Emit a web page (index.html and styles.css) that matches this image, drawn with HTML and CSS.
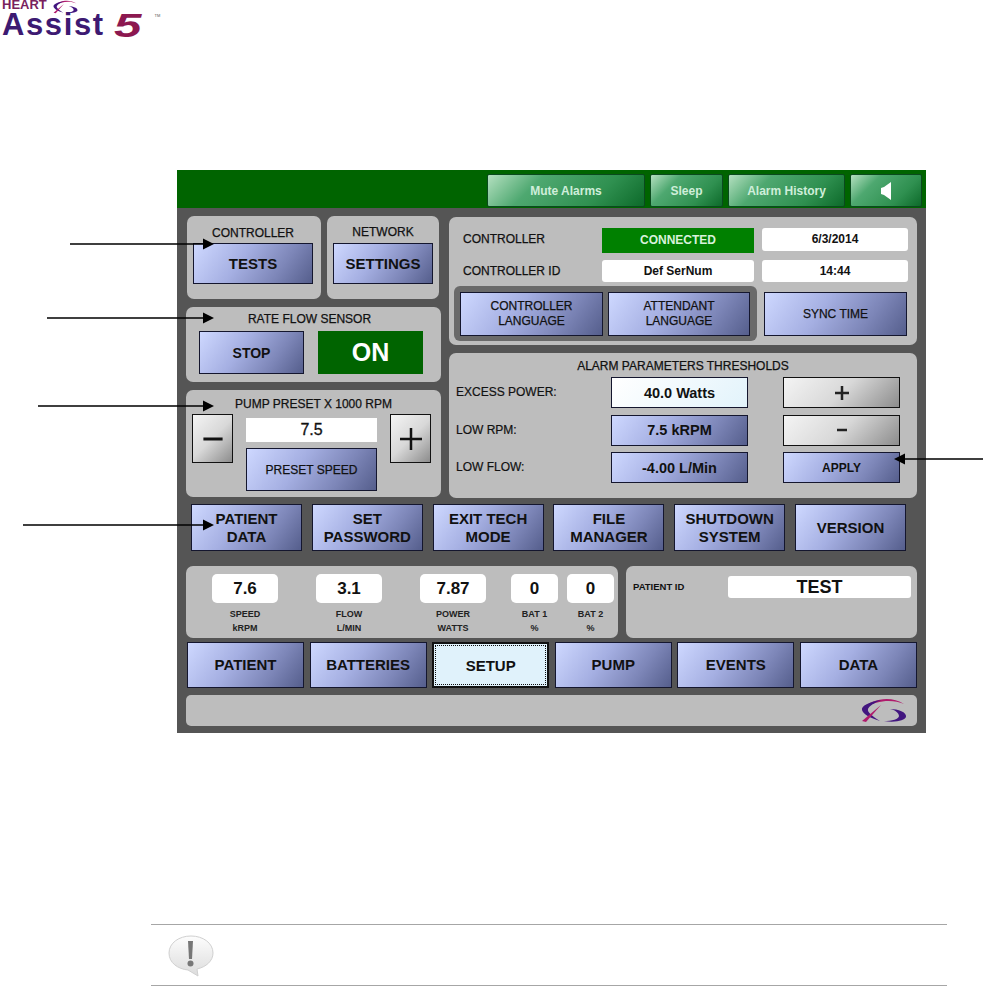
FILE: index.html
```html
<!DOCTYPE html>
<html lang="en">
<head>
  <meta charset="UTF-8" />
  <title>HeartAssist 5 - Setup</title>
  <link rel="stylesheet" href="styles.css">
</head>
<body>

<!-- Logo -->
<header class="logo">
  <div class="logo-top">
    <span class="logo-heart">HEART</span>
    <svg class="logo-swoosh" viewBox="0 0 46 25">
      <path class="sw-pink" d="M3 10C10 1 30-3 43 6 32 1 16 2 3 10Z"/>
      <path class="sw-purple" d="M20 2C8 4 0 8 1 12c1 4 8 8 18 11C11 18 6 14 7 11c1-3 6-6 13-9Z"/>
      <path class="sw-pink" d="M1 23 20 7 5 24Z"/>
      <path class="sw-purple" d="M29 11c8 0 17 3 16 8-1 3-10 6-22 4 8 0 15-2 15-5 0-3-4-6-9-7Z"/>
    </svg>
  </div>
  <div class="logo-bottom">
    <span class="logo-assist">Assist</span>
    <span class="logo-five">5</span>
    <span class="logo-tm">TM</span>
  </div>
</header>

<!-- Controller screen -->
<main class="device">
  <div class="topbar">
    <button class="green-btn mute">Mute Alarms</button>
    <button class="green-btn sleep">Sleep</button>
    <button class="green-btn history">Alarm History</button>
    <button class="green-btn speaker">
      <svg viewBox="0 0 10 18" class="speaker-icon"><path d="M0 6 3 5 10 0V18L3 13 0 12Z"/></svg>
    </button>
  </div>

  <div class="screen">
    <div class="columns">
      <div class="col-left">
        <div class="row-pair">
          <section class="panel panel-controller">
            <div class="label">CONTROLLER</div>
            <button class="btn btn-tests">TESTS</button>
          </section>
          <section class="panel panel-network">
            <div class="label">NETWORK</div>
            <button class="btn btn-settings">SETTINGS</button>
          </section>
        </div>

        <section class="panel panel-rate">
          <div class="label">RATE FLOW SENSOR</div>
          <div class="rate-row">
            <button class="btn btn-stop">STOP</button>
            <div class="on-box">ON</div>
          </div>
        </section>

        <section class="panel panel-pump">
          <div class="label">PUMP PRESET X 1000 RPM</div>
          <div class="pump-row">
            <button class="gray-btn step-btn">
              <svg viewBox="0 0 20 20" class="step-icon"><path d="M2 10H18"/></svg>
            </button>
            <div class="pump-mid">
              <div class="pump-value">7.5</div>
              <button class="btn btn-preset">PRESET SPEED</button>
            </div>
            <button class="gray-btn step-btn">
              <svg viewBox="0 0 24 24" class="step-icon"><path d="M1 12H23M12 1V23"/></svg>
            </button>
          </div>
        </section>
      </div>

      <div class="col-right">
        <section class="panel panel-status">
          <div class="status-row status-row-first">
            <div class="status-label">CONTROLLER</div>
            <div class="connected">CONNECTED</div>
            <div class="white-box date-box">6/3/2014</div>
          </div>
          <div class="status-row status-row-second">
            <div class="status-label">CONTROLLER ID</div>
            <div class="white-box">Def SerNum</div>
            <div class="white-box">14:44</div>
          </div>
          <div class="lang-row">
            <div class="lang-group">
              <button class="btn btn-lang">CONTROLLER<br>LANGUAGE</button>
              <button class="btn btn-lang btn-lang-second">ATTENDANT<br>LANGUAGE</button>
            </div>
            <button class="btn btn-sync">SYNC TIME</button>
          </div>
        </section>

        <section class="panel panel-alarm">
          <div class="label">ALARM PARAMETERS THRESHOLDS</div>
          <div class="alarm-grid">
            <div class="alarm-label">EXCESS POWER:</div>
            <button class="alarm-value alarm-active">40.0 Watts</button>
            <button class="gray-btn alarm-step">
              <svg viewBox="0 0 14 14" class="alarm-icon"><path d="M0 7H14M7 0V14"/></svg>
            </button>
            <div class="alarm-label">LOW RPM:</div>
            <button class="btn alarm-value">7.5 kRPM</button>
            <button class="gray-btn alarm-step">
              <svg viewBox="0 0 14 14" class="alarm-icon"><path d="M2 7H12"/></svg>
            </button>
            <div class="alarm-label">LOW FLOW:</div>
            <button class="btn alarm-value">-4.00 L/Min</button>
            <button class="btn btn-apply">APPLY</button>
          </div>
        </section>
      </div>
    </div>

    <div class="tech-row">
      <button class="btn">PATIENT<br>DATA</button>
      <button class="btn">SET<br>PASSWORD</button>
      <button class="btn">EXIT TECH<br>MODE</button>
      <button class="btn">FILE<br>MANAGER</button>
      <button class="btn">SHUTDOWN<br>SYSTEM</button>
      <button class="btn">VERSION</button>
    </div>

    <div class="info-row">
      <section class="panel panel-stats">
        <div class="stat"><div class="stat-value">7.6</div><div class="stat-label">SPEED<br>kRPM</div></div>
        <div class="stat"><div class="stat-value">3.1</div><div class="stat-label">FLOW<br>L/MIN</div></div>
        <div class="stat"><div class="stat-value">7.87</div><div class="stat-label">POWER<br>WATTS</div></div>
        <div class="stat stat-bat"><div class="stat-value">0</div><div class="stat-label">BAT 1<br>%</div></div>
        <div class="stat stat-bat"><div class="stat-value">0</div><div class="stat-label">BAT 2<br>%</div></div>
      </section>
      <section class="panel panel-patient">
        <div class="patient-label">PATIENT ID</div>
        <div class="patient-value">TEST</div>
      </section>
    </div>

    <nav class="tabs">
      <button class="btn">PATIENT</button>
      <button class="btn">BATTERIES</button>
      <button class="tab-active"><span>SETUP</span></button>
      <button class="btn">PUMP</button>
      <button class="btn">EVENTS</button>
      <button class="btn">DATA</button>
    </nav>

    <div class="panel panel-footer">
      <svg class="footer-swoosh" viewBox="0 0 46 25">
        <path class="sw-pink" d="M3 10C10 1 30-3 43 6 32 1 16 2 3 10Z"/>
        <path class="sw-purple" d="M20 2C8 4 0 8 1 12c1 4 8 8 18 11C11 18 6 14 7 11c1-3 6-6 13-9Z"/>
        <path class="sw-pink" d="M1 23 20 7 5 24Z"/>
        <path class="sw-purple" d="M29 11c8 0 17 3 16 8-1 3-10 6-22 4 8 0 15-2 15-5 0-3-4-6-9-7Z"/>
      </svg>
    </div>
  </div>
</main>

<!-- Note row -->
<div class="note">
  <svg class="note-icon" viewBox="0 0 46 42">
    <defs>
      <linearGradient id="bubble" x1="0" y1="0" x2="0" y2="1">
        <stop offset="0" stop-color="#fdfdfd"/>
        <stop offset="1" stop-color="#dcdcdc"/>
      </linearGradient>
    </defs>
    <path d="M23 1C11 1 1 8 1 18s9 16 19 17l10 6-1-7c9-2 16-8 16-16C45 8 35 1 23 1Z" fill="url(#bubble)" stroke="#d0d0d0"/>
    <path d="M20 6h5l-1 18h-3Z" fill="#777"/>
    <circle cx="22.5" cy="28.500" r="3" fill="#777"/>
  </svg>
</div>

<!-- Callout arrows -->
<svg class="callouts" viewBox="0 0 984 986">
  <path d="M70 244H205M47 318H205M38 406H205M23 525H205M903 459H983"/>
  <polygon points="214,244 203,238.500 203,249.500"/>
  <polygon points="214,318 203,312.500 203,323.500"/>
  <polygon points="214,406 203,400.500 203,411.500"/>
  <polygon points="214,525 203,519.500 203,530.500"/>
  <polygon points="894,459 905,453.500 905,464.500"/>
</svg>

</body>
</html>
```

FILE: styles.css
```css
* {
  margin: 0;
  padding: 0;
  box-sizing: border-box;
}

body {
  background: white;
  font-family: "Liberation Sans", Arial, sans-serif;
  color: #111;
  position: relative;
  width: 984px;
  height: 986px;
  overflow: hidden;
}

button {
  font-family: inherit;
  color: #111;
  cursor: pointer;
}

/* Logo */
.logo {
  height: 170px;
  padding-left: 2px;
}

.logo-top {
  display: flex;
  height: 13px;
}

.logo-heart {
  font-size: 13px;
  line-height: 10px;
  font-weight: bold;
  color: #7a1f5e;
}

.logo-swoosh {
  width: 25px;
  height: 14px;
  margin-left: 6px;
}

.sw-pink {
  fill: #b01a6b;
}

.sw-purple {
  fill: #42167f;
}

.logo-bottom {
  display: flex;
  align-items: flex-start;
  height: 24px;
}

.logo-assist {
  font-size: 31px;
  line-height: 24px;
  font-weight: bold;
  letter-spacing: 1.6px;
  color: #3d1a72;
}

.logo-five {
  font-size: 34px;
  line-height: 24px;
  font-weight: bold;
  font-style: italic;
  color: #8c1850;
  margin-left: 9px;
  transform: scaleX(1.45);
  transform-origin: left top;
}

.logo-tm {
  font-size: 4px;
  color: #555;
  margin-left: 22px;
}

/* Device frame */
.device {
  margin-left: 177px;
  width: 749px;
  height: 563px;
  background: #555555;
}

.topbar {
  height: 38px;
  background: #006400;
  display: flex;
  justify-content: flex-end;
  gap: 5px;
  padding: 4px 4px 1px 0;
}

.green-btn {
  height: 33px;
  border: 1px solid #0a4a1e;
  border-radius: 2px;
  font-size: 12px;
  font-weight: bold;
  color: #cfeeda;
  background: linear-gradient(135deg, #b4e0c0 0%, #4ea870 30%, #2f9050 70%, #0d6a2a 100%);
}

.mute {
  width: 158px;
}

.sleep {
  width: 73px;
}

.history {
  width: 117px;
}

.speaker {
  width: 72px;
  display: flex;
  align-items: center;
  justify-content: center;
}

.speaker-icon {
  width: 10px;
  height: 18px;
  fill: white;
}

.screen {
  padding: 8px 9px 7px;
}

.columns {
  display: flex;
  gap: 8px;
}

.col-left,
.col-right {
  display: flex;
  flex-direction: column;
  gap: 8px;
}

.col-left {
  width: 255px;
}

.col-right {
  width: 468px;
}

.panel {
  background: #bdbdbd;
  border-radius: 7px;
}

.label {
  font-size: 12px;
  text-align: center;
  -webkit-text-stroke: 0.25px #111;
  line-height: 14px;
}

/* Blue raised button used all over the screen */
.btn {
  border: 1px solid #14162e;
  font-weight: bold;
  font-size: 15px;
  line-height: 18px;
  background: linear-gradient(125deg, #ced8ff 0%, #a5afe2 40%, #7d86b8 72%, #555e8c 100%);
}

.gray-btn {
  border: 1px solid #111;
  background: linear-gradient(135deg, #f4f4f4 0%, #d8d8d8 50%, #8c8c8c 100%);
  display: flex;
  align-items: center;
  justify-content: center;
}

.row-pair {
  display: flex;
  gap: 6px;
  height: 83px;
  padding-left: 1px;
}

.panel-controller {
  width: 134px;
  padding: 10px 8px 0 6px;
}

.panel-network {
  width: 112px;
  padding: 9px 6px 0;
}

.btn-tests {
  display: block;
  width: 120px;
  height: 41px;
  margin-top: 3px;
}

.btn-settings {
  display: block;
  width: 100px;
  height: 41px;
  margin-top: 4px;
}

.panel-rate {
  height: 75px;
  padding-top: 5px;
}

.panel-rate .label {
  padding-right: 8px;
}

.rate-row {
  display: flex;
  gap: 14px;
  padding: 5px 0 0 13px;
}

.btn-stop {
  width: 105px;
  height: 43px;
  font-size: 14px;
}

.on-box {
  width: 105px;
  height: 43px;
  background: #006400;
  color: white;
  font-size: 25px;
  font-weight: bold;
  line-height: 43px;
  text-align: center;
}

.panel-pump {
  height: 107px;
  padding-top: 7px;
}

.pump-row {
  display: flex;
  padding: 3px 10px 0 6px;
  justify-content: space-between;
}

.step-btn {
  width: 41px;
  height: 49px;
}

.step-icon {
  width: 24px;
  height: 24px;
  fill: none;
  stroke: #111;
  stroke-width: 2.500;
}

.pump-mid {
  width: 131px;
  padding-top: 4px;
}

.pump-value {
  height: 24px;
  background: white;
  font-size: 16px;
  line-height: 24px;
  text-align: center;
  -webkit-text-stroke: 0.3px #111;
}

.btn-preset {
  display: block;
  width: 131px;
  height: 43px;
  margin-top: 6px;
  font-size: 12px;
  font-weight: normal;
  -webkit-text-stroke: 0.25px #111;
}

/* Connection / clock panel */
.panel-status {
  height: 128px;
  margin-top: 1px;
  padding-top: 11px;
}

.status-row {
  display: grid;
  grid-template-columns: 131px 152px 146px;
  column-gap: 8px;
  padding-left: 14px;
  font-size: 12px;
  font-weight: bold;
  text-align: center;
}

.status-row-first {
  height: 25px;
}

.status-row-second {
  height: 22px;
  margin-top: 7px;
}

.status-label {
  text-align: left;
  font-weight: normal;
  -webkit-text-stroke: 0.25px #111;
  line-height: 22px;
}

.connected {
  background: #008000;
  color: #d8f2dc;
  line-height: 25px;
}

.white-box {
  background: white;
  border-radius: 3px;
  line-height: 22px;
}

.date-box {
  height: 23px;
}

.lang-row {
  display: flex;
  align-items: center;
  margin-top: 4px;
  padding-left: 5px;
}

.lang-group {
  display: flex;
  gap: 5px;
  width: 303px;
  height: 55px;
  padding: 6px;
  background: #6a6a6a;
  border-radius: 6px;
}

.btn-lang {
  width: 143px;
  height: 44px;
  font-size: 12px;
  font-weight: normal;
  line-height: 15px;
  -webkit-text-stroke: 0.25px #111;
}

.btn-lang-second {
  width: 142px;
}

.btn-sync {
  width: 143px;
  height: 44px;
  margin-left: 7px;
  font-size: 12px;
  font-weight: normal;
  -webkit-text-stroke: 0.25px #111;
}

/* Alarm thresholds */
.panel-alarm {
  height: 145px;
  padding-top: 6px;
}

.alarm-grid {
  display: grid;
  grid-template-columns: 155px 137px 117px;
  column-gap: 0;
  row-gap: 6.500px;
  padding: 4px 0 0 7px;
}

.alarm-label {
  font-size: 12px;
  line-height: 31px;
  -webkit-text-stroke: 0.2px #111;
}

.alarm-value {
  height: 31px;
  border: 1px solid #14162e;
  font-size: 14.500px;
  font-weight: bold;
}

.alarm-active {
  background: linear-gradient(135deg, #ffffff 0%, #e2f3fb 100%);
}

.alarm-step {
  grid-column: 3;
  margin-left: 35px;
  width: 117px;
  height: 31px;
}

.btn-apply {
  grid-column: 3;
  margin-left: 35px;
  width: 117px;
  height: 31px;
  font-size: 12px;
}

.alarm-icon {
  width: 14px;
  height: 14px;
  fill: none;
  stroke: #222;
  stroke-width: 2.500;
}

.tech-row {
  display: grid;
  grid-template-columns: repeat(6, 111px);
  column-gap: 9.800px;
  height: 47px;
  margin-top: 6px;
  padding-left: 5px;
}

.info-row {
  display: flex;
  gap: 8px;
  margin-top: 15px;
}

.panel-stats {
  display: grid;
  grid-template-columns: 104px 104px 91px 56px 47px;
  width: 432px;
  height: 72px;
  padding: 8px 0 0 26px;
}

.stat {
  width: 66px;
  text-align: center;
}

.stat-bat {
  width: 47px;
}

.stat-value {
  height: 29px;
  background: white;
  border-radius: 5px;
  font-size: 17px;
  font-weight: bold;
  line-height: 29px;
}

.stat-label {
  margin-top: 4px;
  font-size: 9px;
  font-weight: bold;
  line-height: 14px;
  color: #222;
}

.panel-patient {
  display: flex;
  width: 291px;
  height: 72px;
  padding: 10px 6px 0 7px;
}

.patient-label {
  width: 95px;
  font-size: 9.500px;
  font-weight: bold;
  line-height: 22px;
}

.patient-value {
  width: 183px;
  height: 22px;
  background: white;
  border-radius: 3px;
  font-size: 18px;
  font-weight: bold;
  line-height: 22px;
  text-align: center;
}

.tabs {
  display: grid;
  grid-template-columns: repeat(6, 117px);
  column-gap: 5.600px;
  height: 46px;
  margin: 4px 0 0 1px;
}

.tab-active {
  border: 2px solid #111;
  background: #e0f2fb;
  font-size: 15px;
  font-weight: bold;
  padding: 1px;
}

.tab-active span {
  display: flex;
  align-items: center;
  justify-content: center;
  height: 100%;
  border: 1px dotted #111;
}

.panel-footer {
  display: flex;
  justify-content: flex-end;
  height: 31px;
  margin-top: 7px;
  padding: 3px 10px 0 0;
  border-radius: 5px;
}

.footer-swoosh {
  width: 46px;
  height: 25px;
}

/* Note at the bottom */
.note {
  margin: 191px 0 0 151px;
  width: 796px;
  height: 62px;
  border-top: 1px solid #a6a6a6;
  border-bottom: 1px solid #a6a6a6;
  padding: 10px 0 0 17px;
}

.note-icon {
  width: 46px;
  height: 42px;
  display: block;
}

/* Arrows lie over everything */
.callouts {
  position: absolute;
  top: 0;
  left: 0;
  width: 984px;
  height: 986px;
  pointer-events: none;
}

.callouts path {
  fill: none;
  stroke: black;
  stroke-width: 1.500;
}

.callouts polygon {
  fill: black;
}
```
